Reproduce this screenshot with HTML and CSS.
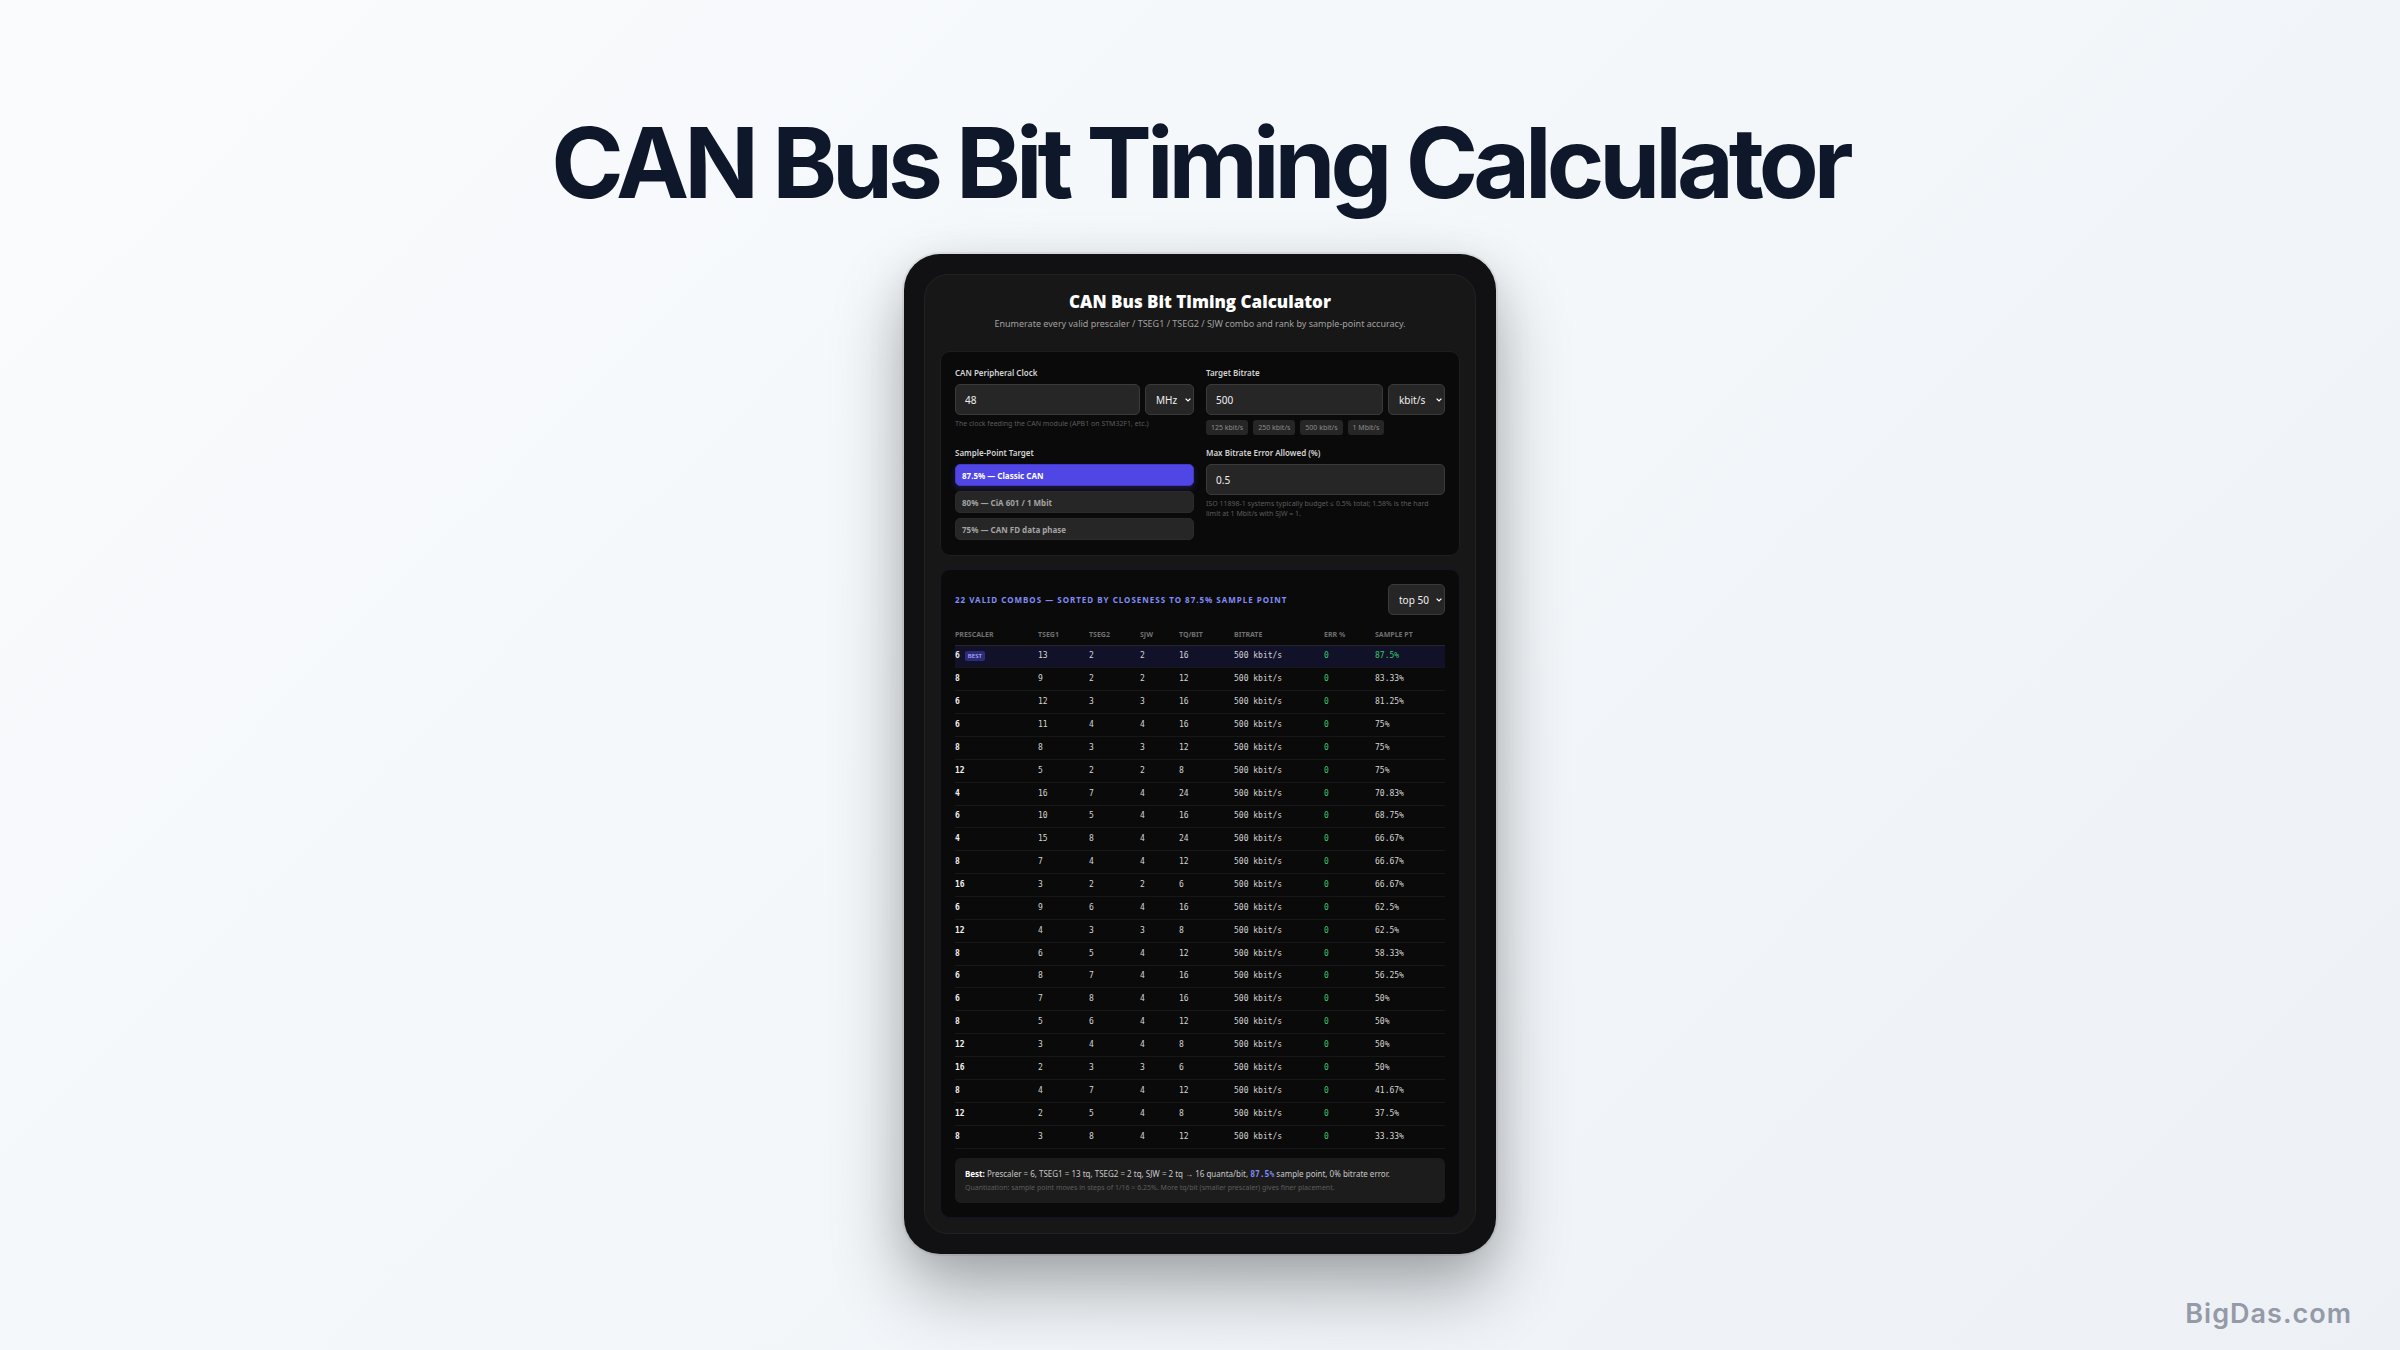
FILE: index.html
```html
<!DOCTYPE html>
<html lang="en">
<head>
<meta charset="utf-8">
<title>CAN Bus Bit Timing Calculator</title>
<link rel="stylesheet" href="styles.css">
</head>
<body>
<h1 class="headline">CAN Bus Bit Timing Calculator</h1>
<main class="device">
  <div class="screen">
    <header class="intro">
      <h2 class="intro-title">CAN Bus Bit Timing Calculator</h2>
      <p class="intro-text">Enumerate every valid prescaler / TSEG1 / TSEG2 / SJW combo and rank by sample-point accuracy.</p>
    </header>

    <form class="panel settings">
      <div class="field">
        <label class="label" for="clock">CAN Peripheral Clock</label>
        <div class="row">
          <input class="input" id="clock" type="text" value="48">
          <select class="select select-clock" aria-label="Clock unit"><option>MHz</option><option>kHz</option></select>
        </div>
        <p class="hint">The clock feeding the CAN module (APB1 on STM32F1, etc.)</p>
      </div>
      <div class="field">
        <label class="label" for="bitrate">Target Bitrate</label>
        <div class="row">
          <input class="input" id="bitrate" type="text" value="500">
          <select class="select select-wide" aria-label="Bitrate unit"><option>kbit/s</option><option>Mbit/s</option></select>
        </div>
        <div class="chips">
          <button class="chip" type="button">125 kbit/s</button>
          <button class="chip" type="button">250 kbit/s</button>
          <button class="chip" type="button">500 kbit/s</button>
          <button class="chip" type="button">1 Mbit/s</button>
        </div>
      </div>
      <div class="field" role="group" aria-labelledby="target-label">
        <span class="label" id="target-label">Sample-Point Target</span>
        <div class="targets">
          <button class="target target-active" type="button">87.5% — Classic CAN</button>
          <button class="target" type="button">80% — CiA 601 / 1 Mbit</button>
          <button class="target" type="button">75% — CAN FD data phase</button>
        </div>
      </div>
      <div class="field">
        <label class="label" for="error">Max Bitrate Error Allowed (%)</label>
        <div class="row"><input class="input" id="error" type="text" value="0.5"></div>
        <p class="hint">ISO 11898-1 systems typically budget ≤ 0.5% total; 1.58% is the hard limit at 1 Mbit/s with SJW = 1.</p>
      </div>
    </form>

    <section class="panel results">
      <div class="results-head">
        <h3 class="results-title">22 valid combos — sorted by closeness to 87.5% sample point</h3>
        <select class="select select-wide" aria-label="Rows shown"><option>top 50</option><option>top 100</option></select>
      </div>
      <table class="table">
        <colgroup><col class="c-pre"><col class="c-seg"><col class="c-seg"><col class="c-sjw"><col class="c-tq"><col class="c-rate"><col class="c-seg"><col></colgroup>
        <thead><tr><th>Prescaler</th><th>TSEG1</th><th>TSEG2</th><th>SJW</th><th>TQ/bit</th><th>Bitrate</th><th>Err %</th><th>Sample pt</th></tr></thead>
        <tbody>
          <tr class="best"><td>6<span class="badge">BEST</span></td><td>13</td><td>2</td><td>2</td><td>16</td><td>500 kbit/s</td><td>0</td><td>87.5%</td></tr>
          <tr><td>8</td><td>9</td><td>2</td><td>2</td><td>12</td><td>500 kbit/s</td><td>0</td><td>83.33%</td></tr>
          <tr><td>6</td><td>12</td><td>3</td><td>3</td><td>16</td><td>500 kbit/s</td><td>0</td><td>81.25%</td></tr>
          <tr><td>6</td><td>11</td><td>4</td><td>4</td><td>16</td><td>500 kbit/s</td><td>0</td><td>75%</td></tr>
          <tr><td>8</td><td>8</td><td>3</td><td>3</td><td>12</td><td>500 kbit/s</td><td>0</td><td>75%</td></tr>
          <tr><td>12</td><td>5</td><td>2</td><td>2</td><td>8</td><td>500 kbit/s</td><td>0</td><td>75%</td></tr>
          <tr><td>4</td><td>16</td><td>7</td><td>4</td><td>24</td><td>500 kbit/s</td><td>0</td><td>70.83%</td></tr>
          <tr><td>6</td><td>10</td><td>5</td><td>4</td><td>16</td><td>500 kbit/s</td><td>0</td><td>68.75%</td></tr>
          <tr><td>4</td><td>15</td><td>8</td><td>4</td><td>24</td><td>500 kbit/s</td><td>0</td><td>66.67%</td></tr>
          <tr><td>8</td><td>7</td><td>4</td><td>4</td><td>12</td><td>500 kbit/s</td><td>0</td><td>66.67%</td></tr>
          <tr><td>16</td><td>3</td><td>2</td><td>2</td><td>6</td><td>500 kbit/s</td><td>0</td><td>66.67%</td></tr>
          <tr><td>6</td><td>9</td><td>6</td><td>4</td><td>16</td><td>500 kbit/s</td><td>0</td><td>62.5%</td></tr>
          <tr><td>12</td><td>4</td><td>3</td><td>3</td><td>8</td><td>500 kbit/s</td><td>0</td><td>62.5%</td></tr>
          <tr><td>8</td><td>6</td><td>5</td><td>4</td><td>12</td><td>500 kbit/s</td><td>0</td><td>58.33%</td></tr>
          <tr><td>6</td><td>8</td><td>7</td><td>4</td><td>16</td><td>500 kbit/s</td><td>0</td><td>56.25%</td></tr>
          <tr><td>6</td><td>7</td><td>8</td><td>4</td><td>16</td><td>500 kbit/s</td><td>0</td><td>50%</td></tr>
          <tr><td>8</td><td>5</td><td>6</td><td>4</td><td>12</td><td>500 kbit/s</td><td>0</td><td>50%</td></tr>
          <tr><td>12</td><td>3</td><td>4</td><td>4</td><td>8</td><td>500 kbit/s</td><td>0</td><td>50%</td></tr>
          <tr><td>16</td><td>2</td><td>3</td><td>3</td><td>6</td><td>500 kbit/s</td><td>0</td><td>50%</td></tr>
          <tr><td>8</td><td>4</td><td>7</td><td>4</td><td>12</td><td>500 kbit/s</td><td>0</td><td>41.67%</td></tr>
          <tr><td>12</td><td>2</td><td>5</td><td>4</td><td>8</td><td>500 kbit/s</td><td>0</td><td>37.5%</td></tr>
          <tr><td>8</td><td>3</td><td>8</td><td>4</td><td>12</td><td>500 kbit/s</td><td>0</td><td>33.33%</td></tr>
        </tbody>
      </table>
      <div class="note">
        <p class="note-main"><strong>Best:</strong> Prescaler = 6, TSEG1 = 13 tq, TSEG2 = 2 tq, SJW = 2 tq → 16 quanta/bit, <span class="note-value">87.5%</span> sample point, 0% bitrate error.</p>
        <p class="note-sub">Quantization: sample point moves in steps of 1/16 ≈ 6.25%. More tq/bit (smaller prescaler) gives finer placement.</p>
      </div>
    </section>
  </div>
</main>
<footer class="brand">BigDas.com</footer>
</body>
</html>
```
FILE: styles.css
```css
* { box-sizing: border-box; }

body {
  margin: 0;
  min-height: 100vh;
  display: flex;
  flex-direction: column;
  align-items: center;
  padding: 103px 48px 20px;
  background: linear-gradient(135deg, #fafbfd 0%, #f3f7fa 50%, #edf0f5 100%);
  font-family: "Noto Sans", "Open Sans", sans-serif;
  color: #e5e5e5;
}

h1, h2, h3, p { margin: 0; }

button, input, select { font-family: inherit; margin: 0; }

.headline {
  font: 700 98px/120px Inter, sans-serif;
  letter-spacing: -5px;
  color: #0f172a;
  text-align: center;
}

.device {
  width: 100%;
  max-width: 592px;
  margin-top: 31px;
  padding: 20px;
  border-radius: 36px;
  background: #111113;
  box-shadow: 0 0 0 2px rgba(0, 0, 0, 0.06), 0 36px 72px rgba(0, 0, 0, 0.3), 0 10px 40px rgba(0, 0, 0, 0.08);
}

.screen {
  display: flex;
  flex-direction: column;
  padding: 15px;
  border: 1px solid #222;
  border-radius: 24px;
  background: #171717;
}

.intro { text-align: center; padding-bottom: 17px; }
.intro-title { font: 800 17px/24px "Open Sans", sans-serif; color: #fff; }
.intro-text { font-size: 9px; line-height: 20px; color: #a1a1a1; }

.panel {
  padding: 14px;
  border: 1px solid #1e1e1e;
  border-radius: 10px;
  background: #0a0a0a;
}

.settings {
  display: grid;
  grid-template-columns: 1fr 1fr;
  gap: 11px 12px;
  padding-bottom: 15px;
}

.label {
  display: block;
  margin-bottom: 5px;
  font-size: 8px;
  font-weight: 600;
  line-height: 13px;
  color: #d4d4d4;
}

.row { display: flex; gap: 5px; }

.input, .select {
  height: 31px;
  border: 1px solid #3a3a3a;
  border-radius: 5px;
  background: #262626;
  color: #f0f0f0;
  font-size: 10px;
}
.input { flex: 1; min-width: 0; padding: 0 9px; }
.select {
  appearance: none;
  padding: 0 0 0 10px;
  background: #262626 url("data:image/svg+xml,%3Csvg xmlns='http://www.w3.org/2000/svg' viewBox='0 0 6 4'%3E%3Cpath d='M.6.6 3 3 5.4.6' fill='none' stroke='%23fff' stroke-width='1.2'/%3E%3C/svg%3E") no-repeat right 2px center / 6px 4px;
}
.select-clock { width: 49px; }
.select-wide { width: 57px; }

.hint {
  margin-top: 4px;
  padding-right: 12px;
  font-size: 7px;
  line-height: 10px;
  color: #5c5c5c;
}

.chips { display: flex; gap: 5px; margin-top: 5px; }
.chip {
  height: 15px;
  padding: 0 5px;
  border: 0;
  border-radius: 3px;
  background: #262626;
  color: #8c8c8c;
  font-size: 7px;
  line-height: 15px;
}

.targets { display: flex; flex-direction: column; gap: 5px; }
.target {
  height: 22px;
  padding: 0 6px;
  border: 1px solid #2b2b2b;
  border-radius: 5px;
  background: #262626;
  color: #a3a3a3;
  font-size: 8px;
  font-weight: 700;
  text-align: left;
}
.target-active {
  border-color: #4338ca;
  background: #4f46e5;
  color: #fff;
  box-shadow: 0 3px 6px rgba(79, 70, 229, 0.25);
}

.results { margin-top: 13px; border-color: #15142a; }
.results-head { display: flex; align-items: center; justify-content: space-between; }
.results-title {
  font-size: 8px;
  font-weight: 700;
  line-height: 12px;
  letter-spacing: 1px;
  text-transform: uppercase;
  color: #818cf8;
}

.table {
  width: 100%;
  margin-top: 10px;
  border-collapse: collapse;
  table-layout: fixed;
}
.c-pre { width: 83px; }
.c-seg { width: 51px; }
.c-sjw { width: 39px; }
.c-tq { width: 55px; }
.c-rate { width: 90px; }

.table th, .table td { padding: 0; text-align: left; white-space: nowrap; }
.table th {
  height: 20px;
  border-bottom: 1px solid #262626;
  font-size: 7px;
  font-weight: 700;
  text-transform: uppercase;
  color: #707070;
}
.table tbody { height: 503px; }
.table td {
  height: 21px;
  border-bottom: 1px solid #171717;
  font: 8px/12px "DejaVu Sans Mono", monospace;
  color: #d4d4d4;
}
.table td:first-child { font-weight: 700; color: #f0f0f0; }
.table td:nth-child(7), .table .best td:last-child { color: #34c767; }
.best { background: #12112a; }
.badge {
  display: inline-block;
  margin-left: 5px;
  padding: 0 3px;
  border-radius: 2px;
  background: #2e2a78;
  color: #a5b4fc;
  font: 600 6px/10px "Open Sans", sans-serif;
  vertical-align: middle;
}

.note { margin-top: 9px; padding: 8px 10px; border-radius: 6px; background: #1c1c1c; }
.note-main { font-size: 8px; line-height: 15px; color: #c8c8c8; }
.note-main strong { color: #fff; }
.note-value { font: 700 8px/12px "DejaVu Sans Mono", monospace; color: #818cf8; }
.note-sub { font-size: 7px; line-height: 14px; color: #5c5c5c; }

.brand {
  align-self: flex-end;
  margin-top: auto;
  font: 600 27px/32px Inter, sans-serif;
  letter-spacing: 1px;
  color: #949aa6;
}
```
